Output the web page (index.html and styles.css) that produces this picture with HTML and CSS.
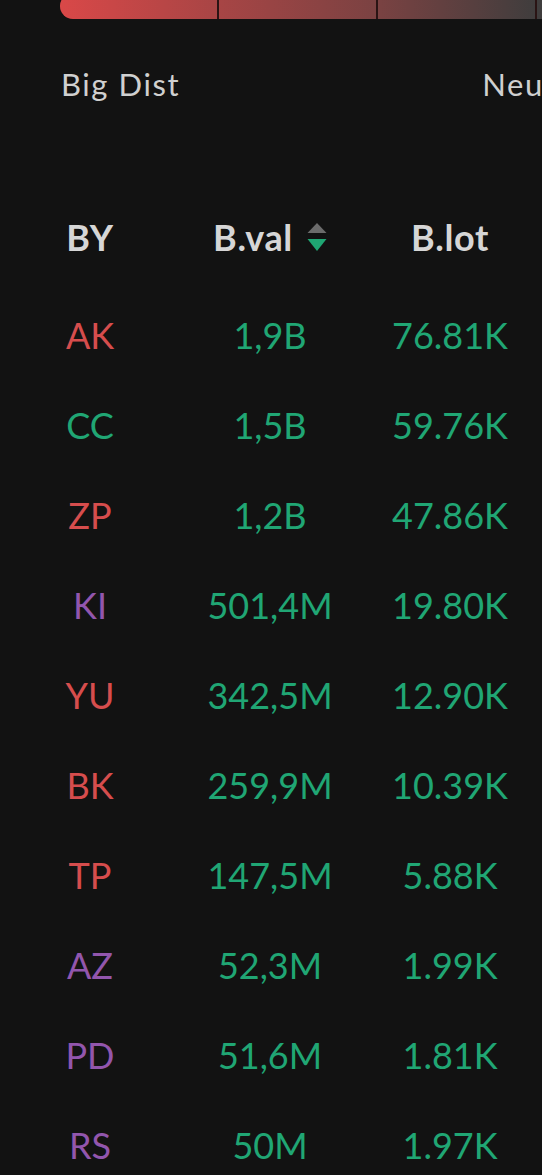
FILE: index.html
```html
<!DOCTYPE html>
<html>
<head>
<meta charset="utf-8">
<link rel="stylesheet" href="styles.css">
</head>
<body>
<div class="page">
  <div class="dist-bar">
    <div class="seg"></div>
    <div class="seg"></div>
    <div class="seg"></div>
    <div class="seg"></div>
  </div>
  <div class="tabs">
    <span class="tab">Big Dist</span>
    <span class="tab">Neutral</span>
  </div>
  <div class="table">
    <div class="row head">
      <div class="cell">BY</div>
      <div class="cell">B.val<svg class="sort" width="20" height="28" viewBox="0 0 20 28"><polygon points="10,0 19.5,10 0.5,10" fill="#6b6b6b"/><polygon points="0.5,16 19.5,16 10,28" fill="#1fa673"/></svg></div>
      <div class="cell">B.lot</div>
    </div>
    <div class="row"><div class="cell red">AK</div><div class="cell green">1,9B</div><div class="cell green">76.81K</div></div>
    <div class="row"><div class="cell green">CC</div><div class="cell green">1,5B</div><div class="cell green">59.76K</div></div>
    <div class="row"><div class="cell red">ZP</div><div class="cell green">1,2B</div><div class="cell green">47.86K</div></div>
    <div class="row"><div class="cell purple">KI</div><div class="cell green">501,4M</div><div class="cell green">19.80K</div></div>
    <div class="row"><div class="cell red">YU</div><div class="cell green">342,5M</div><div class="cell green">12.90K</div></div>
    <div class="row"><div class="cell red">BK</div><div class="cell green">259,9M</div><div class="cell green">10.39K</div></div>
    <div class="row"><div class="cell red">TP</div><div class="cell green">147,5M</div><div class="cell green">5.88K</div></div>
    <div class="row"><div class="cell purple">AZ</div><div class="cell green">52,3M</div><div class="cell green">1.99K</div></div>
    <div class="row"><div class="cell purple">PD</div><div class="cell green">51,6M</div><div class="cell green">1.81K</div></div>
    <div class="row"><div class="cell purple">RS</div><div class="cell green">50M</div><div class="cell green">1.97K</div></div>
  </div>
</div>
</body>
</html>
```
FILE: styles.css
```css
html, body {
  margin: 0;
  padding: 0;
  background: #121212;
  overflow: hidden;
}
.page {
  width: 542px;
  height: 1175px;
  overflow: hidden;
  font-family: Lato, "Open Sans", sans-serif;
  color: #d2d2d2;
}
.dist-bar {
  display: flex;
  gap: 2px;
  margin-top: -7px;
  margin-left: 60px;
  width: 640px;
  height: 26px;
  border-radius: 13px 0 0 13px;
  overflow: hidden;
  background: #2a1414;
}
.seg {
  flex: 0 0 157px;
  background: linear-gradient(90deg, #d94848 0px, #a84545 157px, #7a4242 318px, #3f3d3d 477px, #3a3a3a 640px);
  background-size: 640px 100%;
}
.seg:nth-child(1) { background-position: 0 0; }
.seg:nth-child(2) { background-position: -159px 0; }
.seg:nth-child(3) { background-position: -318px 0; }
.seg:nth-child(4) { background-position: -477px 0; }
.tabs {
  display: flex;
  gap: 302px;
  margin-top: 45px;
  padding-left: 61px;
  height: 40px;
  line-height: 40px;
  font-size: 31px;
  letter-spacing: 1.6px;
  color: #d0d0d0;
  white-space: nowrap;
}
.table {
  margin-top: 88px;
}
.row {
  display: grid;
  grid-template-columns: 180px 180px 180px;
  height: 90px;
  align-items: center;
  font-size: 36px;
}
.row.head {
  font-weight: 700;
  color: #d6d6d6;
  margin-bottom: 8px;
  letter-spacing: 0.6px;
}
.cell {
  display: flex;
  justify-content: center;
  align-items: center;
}
.sort {
  margin-left: 14px;
}
.red { color: #d64d4d; }
.green { color: #20a674; }
.purple { color: #9256ad; }
```
